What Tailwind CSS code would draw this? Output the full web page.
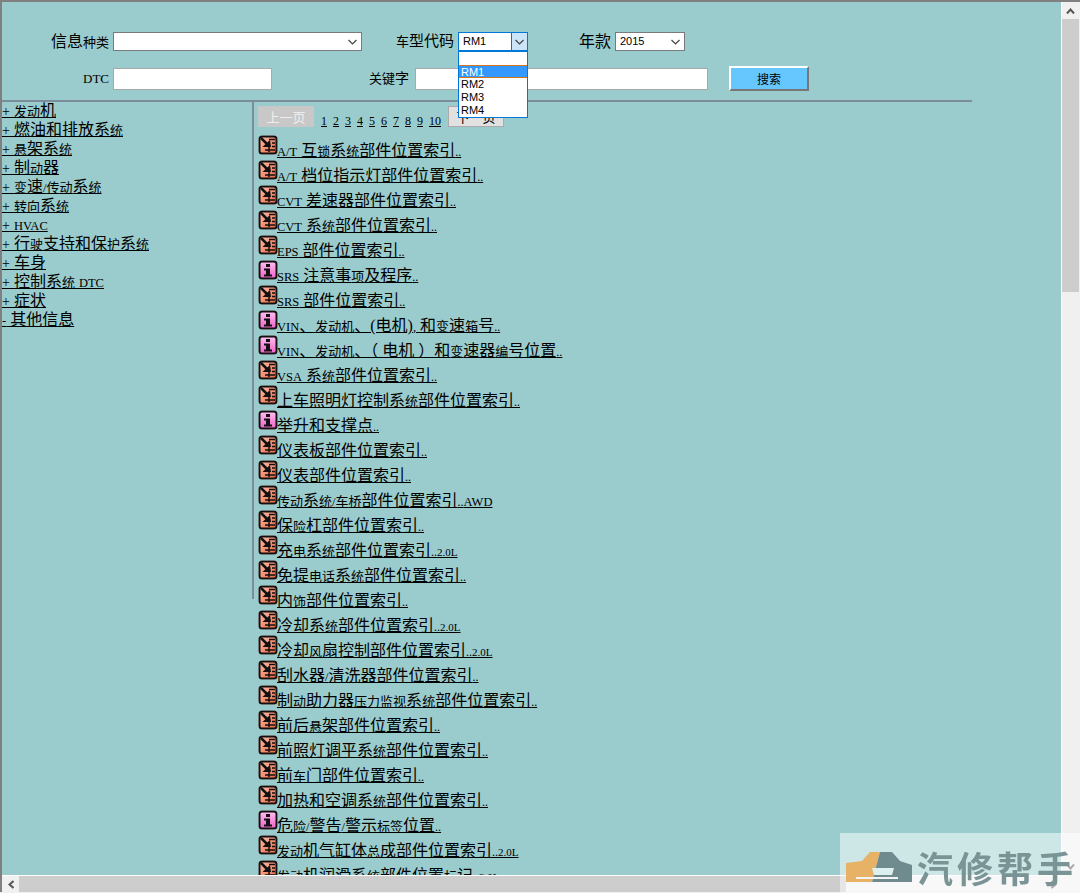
<!DOCTYPE html>
<html lang="zh-CN">
<head>
    <meta charset="UTF-8">
    <title>信息检索</title>
    <script src="https://cdn.jsdelivr.net/npm/@tailwindcss/browser@4"></script>
</head>
<body class="bg-[#f0f0f0] font-['Liberation_Serif','Noto_Sans_CJK_SC',serif] text-black">
    <svg class="absolute w-0 h-0">
        <defs>
            <linearGradient id="warm" x1="0" y1="0" x2="1" y2="1">
                <stop offset="0" stop-color="#ffc0aa"/>
                <stop offset="1" stop-color="#ea6440"/>
            </linearGradient>
            <linearGradient id="pink" x1="0" y1="0" x2="0" y2="1">
                <stop offset="0" stop-color="#ffc0f0"/>
                <stop offset="1" stop-color="#f060c8"/>
            </linearGradient>
        </defs>
        <symbol id="icon-part" viewBox="0 0 20 20">
            <rect x="0.5" y="0.5" width="19" height="19" rx="3.5" fill="#fff"/>
            <rect x="1.5" y="1.5" width="17" height="17" rx="2.5" fill="url(#warm)" stroke="#111" stroke-width="2"/>
            <path d="M3 3 L10 10" stroke="#111" stroke-width="2.5"/>
            <path d="M4.5 12 L13 12 L12 5 Z" fill="#111"/>
            <path d="M11 4.5h6M14 8h3M14 11.5h3M7 15h10" stroke="#111" stroke-width="1.7"/>
            <path d="M11 9v8" stroke="#111" stroke-width="1.5"/>
        </symbol>
        <symbol id="icon-info" viewBox="0 0 20 20">
            <rect x="0.5" y="0.5" width="19" height="19" rx="3.5" fill="#fff"/>
            <rect x="1.5" y="1.5" width="17" height="17" rx="2.5" fill="url(#pink)" stroke="#111" stroke-width="2"/>
            <path d="M8 4h4v3H8zM6 8.5h6v6h2v2H6v-2h2v-4H6z" fill="#111"/>
        </symbol>
    </svg>

    <div class="relative w-[1080px] h-[893px] overflow-hidden">
        <div class="flex h-[892px] border-t-2 border-l-2 border-[#808080]">
            <div class="w-[1059px] h-[873px] overflow-hidden bg-[#9acccd]">
                <form class="h-[98px] relative">
                    <div class="flex items-center pt-[30px] h-[49px]">
                        <label class="w-[107px] text-right text-[16px] whitespace-nowrap">信息<span class="text-[13px]">种类</span></label>
                        <div class="ml-[4px] w-[249px] h-[19px] bg-white border border-[#7a7a7a] flex items-center justify-end pr-[4px]">
                            <svg class="w-[9px] h-[6px]" viewBox="0 0 9 6"><path d="M0.5 1 L4.5 5 L8.5 1" fill="none" stroke="#444" stroke-width="1.2"/></svg>
                        </div>
                        <label class="ml-[34px] w-[57px] text-[15px] whitespace-nowrap"><span class="text-[13px]">车</span>型代码</label>
                        <div class="relative ml-[5px] w-[70px] h-[19px] bg-white border border-[#0078d7] flex items-center font-['Liberation_Sans'] text-[11px] pl-[4px]">
                            RM1
                            <div class="absolute right-0 top-0 w-[16px] h-[17px] bg-[#cce4f7] border-l border-[#0078d7] flex items-center justify-center">
                                <svg class="w-[9px] h-[6px]" viewBox="0 0 9 6"><path d="M0.5 1 L4.5 5 L8.5 1" fill="none" stroke="#444" stroke-width="1.2"/></svg>
                            </div>
                            <ul class="absolute left-[-1px] top-[18px] z-10 w-[70px] h-[67px] bg-white border border-[#0078d7] leading-[13px]">
                                <li class="h-[13px]"></li>
                                <li class="h-[13px] pl-[2px] bg-[#3399ff] text-white border-y border-dotted border-[#d9761c] leading-[12px]">RM1</li>
                                <li class="h-[13px] pl-[2px]">RM2</li>
                                <li class="h-[13px] pl-[2px]">RM3</li>
                                <li class="h-[13px] pl-[2px]">RM4</li>
                            </ul>
                        </div>
                        <label class="ml-[51px] w-[36px] text-[16px] whitespace-nowrap">年款</label>
                        <div class="w-[70px] h-[19px] bg-white border border-[#7a7a7a] flex items-center justify-between font-['Liberation_Sans'] text-[11px] pl-[4px] pr-[4px]">
                            2015
                            <svg class="w-[9px] h-[6px]" viewBox="0 0 9 6"><path d="M0.5 1 L4.5 5 L8.5 1" fill="none" stroke="#444" stroke-width="1.2"/></svg>
                        </div>
                    </div>
                    <div class="flex items-center mt-[15px]">
                        <label class="w-[107px] text-right text-[13px]">DTC</label>
                        <input class="ml-[4px] w-[159px] h-[22px] bg-white border border-[#a9a9a9]" type="text">
                        <label class="ml-[97px] w-[42px] text-[14px] whitespace-nowrap"><span class="text-[13px]">关键</span>字</label>
                        <input class="ml-[4px] w-[293px] h-[22px] bg-white border border-[#a9a9a9]" type="text">
                        <button class="ml-[21px] w-[80px] h-[25px] bg-[#66c7ff] border-2 border-t-white border-l-white border-r-[#777] border-b-[#777] text-[12px] font-['Noto_Sans_CJK_SC']" type="button">搜索</button>
                    </div>
                </form>

                <div class="w-[970px] h-[2px] bg-[#7b8d9a]"></div>

                <div class="flex">
                    <div id="tree" class="w-[250px] -mt-[1px] leading-[19px]"></div>
                    <div class="w-[2px] h-[497px] bg-[#7b8d9a]"></div>
                    <div class="pl-[4px]">
                        <div class="flex items-center h-[33px] pt-[3px] pb-[7px]">
                            <button class="w-[56px] h-[21px] bg-[#c8c8c8] text-[#eeeeee] text-[13px] font-['Noto_Sans_CJK_SC']" type="button">上一页</button>
                            <div id="pages" class="flex ml-[7px] mt-[8px] w-[127px] gap-[6px] text-[12px] underline"></div>
                            <button class="w-[56px] h-[21px] bg-[#e1e1e1] border border-[#aaa] text-[13px] font-['Noto_Sans_CJK_SC']" type="button">下一页</button>
                        </div>
                        <div id="list"></div>
                    </div>
                </div>
            </div>

            <div class="w-[1px] h-[873px] bg-white"></div>
            <div class="w-[17px] h-[873px] flex flex-col bg-[#f0f0f0]">
                <div class="h-[17px] flex items-center justify-center">
                    <svg class="w-[9px] h-[6px]" viewBox="0 0 9 6"><path d="M1 5.5 L4.5 1.5 L8 5.5" fill="none" stroke="#555" stroke-width="2"/></svg>
                </div>
                <div class="h-[273px] bg-[#cdcdcd]"></div>
                <div class="h-[17px] mt-auto flex items-center justify-center">
                    <svg class="w-[9px] h-[6px]" viewBox="0 0 9 6"><path d="M1 0.5 L4.5 4.5 L8 0.5" fill="none" stroke="#555" stroke-width="2"/></svg>
                </div>
            </div>
        </div>

        <!-- horizontal scrollbar -->
        <div class="absolute left-[2px] top-[875px] w-[1060px] h-[17px] border-t border-white bg-[#f0f0f0] flex">
            <div class="w-[17px] flex items-center justify-center">
                <svg class="w-[6px] h-[9px]" viewBox="0 0 6 9"><path d="M5.5 1 L1.5 4.5 L5.5 8" fill="none" stroke="#555" stroke-width="2"/></svg>
            </div>
            <div class="w-[827px] bg-[#cdcdcd]"></div>
            <div class="w-[17px] ml-auto flex items-center justify-center">
                <svg class="w-[6px] h-[9px]" viewBox="0 0 6 9"><path d="M0.5 1 L4.5 4.5 L0.5 8" fill="none" stroke="#555" stroke-width="2"/></svg>
            </div>
        </div>

        <!-- watermark -->
        <div class="absolute left-[840px] top-[833px] w-[240px] h-[60px] bg-white/50 flex items-center pl-[6px]">
            <svg class="w-[66px] h-[32px] mt-[8px] blur-[0.5px]" viewBox="0 0 66 32">
                <path d="M0 12 L16 10 L24 1 L34 1 L26 31 L0 31 Z" fill="#e8b266"/>
                <path d="M34 1 L46 1 L54 10 L66 14 L66 31 L26 31 Z" fill="#6f8b8e"/>
                <path d="M26 17 L48 17 L46 24 L28 24 Z" fill="#dcefef"/>
                <path d="M10 27 L52 27" stroke="#f4f4f4" stroke-width="2"/>
            </svg>
            <span class="ml-[5px] mt-[8px] text-[36px] leading-none font-bold tracking-[4px] text-[#7a9395] font-['Noto_Sans_CJK_SC'] whitespace-nowrap blur-[0.5px]">汽修帮手</span>
        </div>
    </div>

    <script>
        const tree = ['+ 发动机', '+ 燃油和排放系统', '+ 悬架系统', '+ 制动器', '+ 变速/传动系统', '+ ^转^向系统', '+ HVAC',
            '+ 行驶支持和保护系统', '+ 车身', '+ 控制系统 DTC', '+ 症状', '- 其他信息'];

        // p = part location icon, i = info icon
        const items = [
            ['p', 'A/T 互锁系统部件位置索引..'], ['p', 'A/T 档位指示灯部件位置索引..'], ['p', 'CVT 差速器部件位置索引..'],
            ['p', 'CVT 系统部件位置索引..'], ['p', 'EPS 部件位置索引..'], ['i', 'SRS 注意事项及程序..'],
            ['p', 'SRS 部件位置索引..'], ['i', 'VIN、发动^机、(电机), 和变速箱号..'], ['i', 'VIN、发动^机、（ 电机 ）和变速器编号位置..'],
            ['p', 'VSA 系统部件位置索引..'], ['p', '上车照明灯控制系统部件位置索引..'], ['i', '举升和支撑点..'],
            ['p', '仪表板部件位置索引..'], ['p', '仪表部件位置索引..'], ['p', '传动系统/^车桥部件位置索引..AWD'],
            ['p', '保险杠部件位置索引..'], ['p', '充^电系统部件位置索引..2.0L'], ['p', '免提^电话系统部件位置索引..'],
            ['p', '内饰部件位置索引..'], ['p', '冷却系统部件位置索引..2.0L'], ['p', '冷却^风扇控制部件位置索引..2.0L'],
            ['p', '刮水器/清洗器部件位置索引..'], ['p', '制动助力器压^力监视系统部件位置索引..'], ['p', '前后悬架部件位置索引..'],
            ['p', '前照灯调平系统部件位置索引..'], ['p', '前^车门部件位置索引..'], ['p', '加热和空调系统部件位置索引..'],
            ['i', '危险/警告/警示标签位置..'], ['p', '发动机气缸体总成部件位置索引..2.0L'], ['p', '发动机润滑系统部件位置标记..2.0L']
        ];

        // the source page falls back to a smaller face for some glyphs
        function fmt(s) {
            return s.replace(/\^(.)|([发动统传驶护锁项险编箱桥话压监视悬饰标签总变])|(\.\.)|(2\.0L)|(\+)|([A-Za-z0-9.\/,-]+)/g, (m, a, b, dots, litre, plus) => {
                if (a || b) return `<span class="text-[13px]">${a || b}</span>`;
                if (dots) return `<span class="text-[12px]">..</span>`;
                if (litre) return `<span class="text-[11px]">${m}</span>`;
                if (plus) return `<span class="text-[14px]">+</span>`;
                return `<span class="text-[12.5px]">${m}</span>`;
            });
        }

        document.getElementById('tree').innerHTML = tree.map(t =>
            `<div class="h-[19px] text-[16px] whitespace-nowrap"><a class="underline" href="#">${fmt(t)}</a></div>`).join('');

        document.getElementById('pages').innerHTML = [1, 2, 3, 4, 5, 6, 7, 8, 9, 10].map(n => `<a href="#">${n}</a>`).join('');

        document.getElementById('list').innerHTML = items.map(([k, t]) =>
            `<div class="flex h-[25px] whitespace-nowrap">
                <svg class="w-[20px] h-[20px] shrink-0"><use href="#icon-${k === 'p' ? 'part' : 'info'}"/></svg>
                <a class="underline text-[16px] leading-[20px] mt-[6px] -ml-[1px]" href="#">${fmt(t)}</a>
            </div>`).join('');
    </script>
</body>
</html>
